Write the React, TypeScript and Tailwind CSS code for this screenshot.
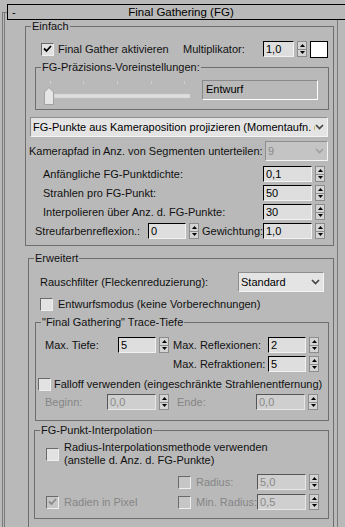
import React from "react";

const txt = "text-[#111]";
const dim = "text-[#858585]";

function Spinner() {
  return (
    <div className="ml-[3px] flex h-[16px] w-[10px] shrink-0 flex-col border border-[#8c8c8c] bg-[#d4d4d4]">
      <div className="flex flex-1 items-center justify-center border-b border-[#8c8c8c]">
        <svg width="5" height="3" viewBox="0 0 5 3"><path d="M0 3 L2.5 0 L5 3 Z" fill="#000" /></svg>
      </div>
      <div className="flex flex-1 items-center justify-center">
        <svg width="5" height="3" viewBox="0 0 5 3"><path d="M0 0 L2.5 3 L5 0 Z" fill="#000" /></svg>
      </div>
    </div>
  );
}

function Field({ value, w, off }: { value: string; w: string; off?: boolean }) {
  return (
    <div
      className={`${w} flex h-[16px] shrink-0 items-center border-t border-l pl-[2px] ${
        off
          ? "border-t-[#555] border-l-[#555] border-b border-r border-b-[#e6e6e6] border-r-[#e6e6e6] bg-[#cfcfcf] text-[#8a8a8a]"
          : "border-t-[#000] border-l-[#000] border-b border-r border-b-[#f2f2f2] border-r-[#f2f2f2] bg-[#dedede] text-[#000]"
      }`}
    >
      {value}
    </div>
  );
}

function Check({ on, off }: { on?: boolean; off?: boolean }) {
  return (
    <div
      className={`flex h-[13px] w-[13px] shrink-0 items-center justify-center border-t border-l border-t-[#6a6a6a] border-l-[#6a6a6a] border-b border-r border-b-[#eeeeee] border-r-[#eeeeee] ${
        off ? "bg-[#c6c6c6]" : "bg-[#e2e2e2]"
      }`}
    >
      {on && (
        <svg width="9" height="8" viewBox="0 0 9 8">
          <path d="M1 3.5 L3.5 6 L8 1" fill="none" stroke={off ? "#8a8a8a" : "#000"} strokeWidth="1.8" />
        </svg>
      )}
    </div>
  );
}

function Chevron({ color }: { color: string }) {
  return (
    <svg width="9" height="6" viewBox="0 0 9 6" className="shrink-0">
      <path d="M1 1 L4.5 4.5 L8 1" fill="none" stroke={color} strokeWidth="1.7" />
    </svg>
  );
}

function Select({ value, w, off, className = "" }: { value: string; w: string; off?: boolean; className?: string }) {
  return (
    <div
      className={`${w} ${className} flex h-[20px] shrink-0 items-center overflow-hidden border-t border-l border-t-[#8e8e8e] border-l-[#8e8e8e] border-b border-r border-b-[#f4f4f4] border-r-[#f4f4f4] pl-[2px] pr-[3px] ${
        off ? "bg-[#c4c4c4] text-[#8a8a8a]" : "bg-[#e4e4e4] text-[#000]"
      }`}
    >
      <span className="flex-1 overflow-hidden">{value}</span>
      <Chevron color={off ? "#a0a0a0" : "#444"} />
    </div>
  );
}

function Group({ title, className, children }: { title: string; className: string; children: React.ReactNode }) {
  return (
    <fieldset className={`border border-[#6e6e6e] ${className}`}>
      <legend className="ml-[5px] px-[1px] leading-[13px] text-[#111]">{title}</legend>
      {children}
    </fieldset>
  );
}

function Slider() {
  return (
    <svg width="148" height="26" viewBox="0 0 148 26" className="mt-[5px] shrink-0">
      {[6, 39, 73, 107, 140].map((x) => (
        <line key={x} x1={x + 0.5} y1="2" x2={x + 0.5} y2="5" stroke="#d0d0d0" />
      ))}
      <rect x="10" y="15" width="136" height="4" fill="#dedede" stroke="#c8c8c8" strokeWidth="0.5" />
      <path d="M0.5 25.5 L0.5 13 L5 8.5 L9.5 13 L9.5 25.5 Z" fill="#e6e6e6" stroke="#a2a2a2" />
    </svg>
  );
}

export default function App() {
  return (
    <div
      className="h-[527px] w-[345px] overflow-hidden whitespace-nowrap bg-[#b9b9b9] text-[11px] leading-[13px] text-[#111]"
      style={{ fontFamily: '"Liberation Sans", Arial, sans-serif' }}
    >
      {/* rollout header */}
      <div className="mt-[4px] flex h-[16px]">
        <div className="w-[7px] shrink-0">
          <div className="ml-[2px] mt-[8px] flex h-[8px] border-t border-l border-[#7a7a7a]">
            <div className="ml-[1px] border-l border-[#7a7a7a]" />
          </div>
        </div>
        <div className="-mr-[6px] flex flex-1 items-center border border-black">
          <span className="w-[10px] pl-[4px] text-black">-</span>
          <span className="flex-1 pr-[6px] text-center text-[11.5px] text-black">Final Gathering (FG)</span>
        </div>
      </div>

      <div className="flex h-[507px]">
        <div className="ml-[2px] w-[3px] shrink-0 border-x border-[#7a7a7a]" />
        <div className="w-[333px] shrink-0 border-r border-[#7a7a7a]">
          {/* Einfach */}
          <Group title="Einfach" className="ml-[20px] w-[309px] pb-[6px]">
            <div className="mt-[8px] flex h-[16px] items-center pl-[15px]">
              <Check on />
              <span className={`ml-[4px] w-[125px] ${txt}`}>Final Gather aktivieren</span>
              <span className={`w-[80px] ${txt}`}>Multiplikator:</span>
              <Field value="1,0" w="w-[31px]" />
              <Spinner />
              <div className="ml-[3px] h-[17px] w-[18px] border border-black bg-white" />
            </div>

            <Group title="FG-Präzisions-Voreinstellungen:" className="ml-[9px] mt-[4px] w-[294px] pb-[4px]">
              <div className="flex items-start pl-[8px]">
                <Slider />
                <div className="ml-[10px] mt-[6px] h-[20px] w-[116px] border-t border-l border-t-[#8a8a8a] border-l-[#8a8a8a] border-b border-r border-b-white border-r-white pl-[3px] pt-[2px] text-black">
                  Entwurf
                </div>
              </div>
            </Group>

            <Select
              className="ml-[4px] mt-[7px]"
              w="w-[298px]"
              value="FG-Punkte aus Kameraposition projizieren (Momentaufn. des Kamerapfads)"
            />

            <div className="mt-[4px] flex h-[20px] items-center pl-[3px]">
              <span className={`w-[236px] ${txt}`}>Kamerapfad in Anz. von Segmenten unterteilen:</span>
              <Select w="w-[63px]" value="9" off />
            </div>

            <div className="mt-[5px] flex h-[16px] items-center pl-[17px]">
              <span className={`w-[220px] ${txt}`}>Anfängliche FG-Punktdichte:</span>
              <Field value="0,1" w="w-[49px]" />
              <Spinner />
            </div>
            <div className="mt-[3px] flex h-[16px] items-center pl-[17px]">
              <span className={`w-[220px] ${txt}`}>Strahlen pro FG-Punkt:</span>
              <Field value="50" w="w-[49px]" />
              <Spinner />
            </div>
            <div className="mt-[3px] flex h-[16px] items-center pl-[17px]">
              <span className={`w-[220px] ${txt}`}>Interpolieren über Anz. d. FG-Punkte:</span>
              <Field value="30" w="w-[49px]" />
              <Spinner />
            </div>
            <div className="mt-[3px] flex h-[16px] items-center pl-[9px]">
              <span className={`w-[113px] ${txt}`}>Streufarbenreflexion.:</span>
              <Field value="0" w="w-[38px]" />
              <Spinner />
              <span className={`ml-[3px] w-[61px] ${txt}`}>Gewichtung:</span>
              <Field value="1,0" w="w-[49px]" />
              <Spinner />
            </div>
          </Group>

          {/* Erweitert */}
          <Group title="Erweitert" className="ml-[23px] mt-[6px] w-[306px] pb-[8px]">
            <div className="mt-[7px] flex h-[20px] items-center pl-[11px]">
              <span className={`w-[198px] ${txt}`}>Rauschfilter (Fleckenreduzierung):</span>
              <Select w="w-[86px]" value="Standard" />
            </div>
            <div className="mt-[6px] flex h-[13px] items-center pl-[11px]">
              <Check />
              <span className={`ml-[5px] ${txt}`}>Entwurfsmodus (keine Vorberechnungen)</span>
            </div>

            <Group title={'"Final Gathering" Trace-Tiefe'} className="ml-[6px] mt-[5px] w-[294px] pb-[10px]">
              <div className="mt-[8px] flex h-[16px] items-center pl-[9px]">
                <span className={`w-[73px] ${txt}`}>Max. Tiefe:</span>
                <Field value="5" w="w-[38px]" />
                <Spinner />
                <span className={`ml-[4px] w-[95px] ${txt}`}>Max. Reflexionen:</span>
                <Field value="2" w="w-[38px]" />
                <Spinner />
              </div>
              <div className="mt-[3px] flex h-[16px] items-center pl-[137px]">
                <span className={`w-[95px] ${txt}`}>Max. Refraktionen:</span>
                <Field value="5" w="w-[38px]" />
                <Spinner />
              </div>
              <div className="mt-[6px] flex h-[13px] items-center pl-[2px]">
                <Check />
                <span className={`ml-[3px] ${txt}`}>Falloff verwenden (eingeschränkte Strahlenentfernung)</span>
              </div>
              <div className="mt-[3px] flex h-[16px] items-center pl-[9px]">
                <span className={`w-[62px] ${dim}`}>Beginn:</span>
                <Field value="0,0" w="w-[49px]" off />
                <Spinner />
                <span className={`ml-[8px] w-[79px] ${dim}`}>Ende:</span>
                <Field value="0,0" w="w-[49px]" off />
                <Spinner />
              </div>
            </Group>

            <Group title="FG-Punkt-Interpolation" className="ml-[5px] mt-[3px] w-[295px] pb-[8px]">
              <div className="mt-[4px] flex items-center pl-[11px]">
                <Check />
                <div className={`ml-[5px] ${txt}`}>
                  <div>Radius-Interpolationsmethode verwenden</div>
                  <div>(anstelle d. Anz. d. FG-Punkte)</div>
                </div>
              </div>
              <div className="mt-[7px] flex h-[16px] items-center pl-[143px]">
                <Check off />
                <span className={`ml-[5px] w-[61px] ${dim}`}>Radius:</span>
                <Field value="5,0" w="w-[49px]" off />
                <Spinner />
              </div>
              <div className="mt-[4px] flex h-[16px] items-center pl-[11px]">
                <Check on off />
                <span className={`ml-[5px] w-[114px] ${dim}`}>Radien in Pixel</span>
                <Check off />
                <span className={`ml-[5px] w-[61px] ${dim}`}>Min. Radius:</span>
                <Field value="0,5" w="w-[49px]" off />
                <Spinner />
              </div>
            </Group>
          </Group>
        </div>
      </div>
    </div>
  );
}
